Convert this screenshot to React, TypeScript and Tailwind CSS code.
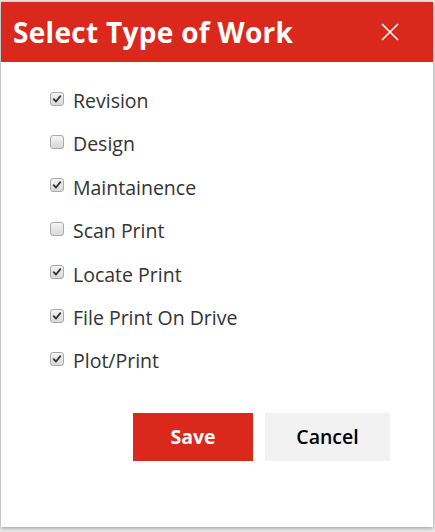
import React, { useState } from "react";

const options = [
  { label: "Revision", checked: true },
  { label: "Design", checked: false },
  { label: "Maintainence", checked: true },
  { label: "Scan Print", checked: false },
  { label: "Locate Print", checked: true },
  { label: "File Print On Drive", checked: true },
  { label: "Plot/Print", checked: true },
];

const Check = ({ on }: { on: boolean }) => (
  <span className="flex h-[14px] w-[14px] items-center justify-center rounded-[3px] border border-[#a9a9a9] bg-gradient-to-b from-[#f4f4f4] to-[#d8d8d8]">
    {on && (
      <svg viewBox="0 0 12 12" className="h-[10px] w-[10px]">
        <path d="M2 6.2 L4.8 9 L10 2.6" fill="none" stroke="#333" strokeWidth="2.2" strokeLinecap="round" strokeLinejoin="round" />
      </svg>
    )}
  </span>
);

export default function App() {
  const [items, setItems] = useState(options);

  return (
    <div className="h-[532px] w-[435px] bg-[#e9e9e9] pl-px pt-[2px] font-['Open_Sans',sans-serif]">
      <div className="flex h-[525px] w-[432px] flex-col bg-white shadow-[0_1px_4px_rgba(0,0,0,0.35)]">
        <div className="flex h-[60px] items-center justify-between bg-[#da291c] pl-[12px] pr-[33px]">
          <h2 className="text-[28px] font-bold tracking-[0.3px] text-white">Select Type of Work</h2>
          <svg viewBox="0 0 20 20" className="h-[20px] w-[20px]">
            <path d="M2 2 L18 18 M18 2 L2 18" stroke="#fff" strokeWidth="1.6" />
          </svg>
        </div>

        <div className="flex flex-col pl-[49px] pt-[17px]">
          {items.map((item, i) => (
            <label
              key={item.label}
              className="flex h-[43.4px] cursor-pointer items-center gap-[9px] text-[19.5px] text-[#333]"
              onClick={() =>
                setItems(items.map((it, j) => (j === i ? { ...it, checked: !it.checked } : it)))
              }
            >
              <span className="-mt-[4px]">
                <Check on={item.checked} />
              </span>
              <span>{item.label}</span>
            </label>
          ))}
        </div>

        <div className="mt-[30px] flex gap-[12px] pl-[132px]">
          <button className="h-[48px] w-[120px] bg-[#da291c] text-[19.5px] font-bold text-white">Save</button>
          <button className="h-[48px] w-[125px] bg-[#f2f2f2] text-[19.5px] font-semibold text-black">Cancel</button>
        </div>
      </div>
    </div>
  );
}
